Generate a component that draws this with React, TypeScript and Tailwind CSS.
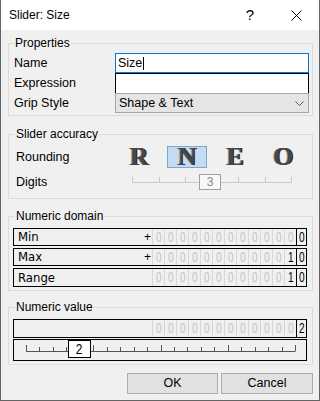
import React from "react";

const ui = "font-['Liberation_Sans',Arial,sans-serif]";
const narrow = "font-['Liberation_Sans_Narrow','DejaVu_Sans_Condensed','Liberation_Sans',sans-serif]";

function Group({ title, legendClass, children }: { title: string; legendClass: string; children: React.ReactNode }) {
  return (
    <fieldset className="border border-[#dcdcdc]">
      <legend className={`px-[1px] text-[12px] leading-[14px] ${legendClass}`}>{title}</legend>
      {children}
    </fieldset>
  );
}

function Cells({ value }: { value: string }) {
  const total = 13;
  const pad = total - value.length;
  const cells = Array.from({ length: total }, (_, i) =>
    i < pad ? { ch: "0", on: false } : { ch: value[i - pad], on: true }
  );
  return (
    <div className="flex h-full">
      {cells.map((c, i) => {
        const last = i === total - 1;
        return (
          <div
            key={i}
            className={`flex h-full items-center justify-center border-l font-['Liberation_Sans',sans-serif] text-[14px] ${
              last ? "w-[10px] border-black" : "w-[12px] border-[#d8d8d8]"
            } ${c.on ? "text-black" : "text-[#c4c4c4]"}`}
          >
            <span className="inline-block scale-x-[0.72]">{c.ch}</span>
          </div>
        );
      })}
    </div>
  );
}

function NumRow({ label, sign, value, h }: { label?: string; sign?: boolean; value: string; h: string }) {
  return (
    <div className={`flex ${h} border border-black bg-[#f0f0f0]`}>
      <span className={`flex flex-1 items-center pl-[4px] text-[13px] ${narrow}`}>{label}</span>
      {sign && <span className="flex w-[8px] items-center text-[12px]">+</span>}
      <Cells value={value} />
    </div>
  );
}

function AccuracySlider() {
  const ticks = Array.from({ length: 7 }, (_, i) => Math.round(i * 26.5) + 0.5);
  return (
    <div className="relative ml-[13px] h-[16px] w-[160px]">
      <svg width="160" height="16" className="block">
        <line x1="0.5" y1="8.5" x2="159.5" y2="8.5" stroke="#c8c8c8" />
        {ticks.map((x) => (
          <line key={x} x1={x} y1="3" x2={x} y2="8.5" stroke="#c8c8c8" />
        ))}
      </svg>
      <div className="absolute left-[67px] top-0 flex h-[16px] w-[22px] items-center justify-center border border-[#a0a0a0] bg-[#f8f8f8] text-[12px] text-[#8a8a8a]">
        3
      </div>
    </div>
  );
}

function ValueSlider() {
  const ticks = Array.from({ length: 21 }, (_, i) => i);
  return (
    <div className="relative h-[22px] border border-black bg-[#f0f0f0]">
      <svg width="292" height="20" className="block">
        <line x1="12" y1="11.5" x2="281" y2="11.5" stroke="#555" />
        {ticks.map((i) => {
          const x = Math.round(12 + i * 13.45) + 0.5;
          const tall = i % 5 === 0;
          return <line key={i} x1={x} y1={tall ? 5 : 7} x2={x} y2="11.5" stroke="#555" />;
        })}
      </svg>
      <div className="absolute left-[54px] top-0 flex h-[18px] w-[23px] items-center justify-center border border-black bg-white text-[15px]">
        <span className="inline-block scale-x-[0.8]">2</span>
      </div>
    </div>
  );
}

const letters = ["R", "N", "E", "O"];

export default function App() {
  return (
    <div className={`flex h-[401px] w-[320px] flex-col border-x border-b border-[#646464] text-black ${ui}`}>
      <div className="flex h-[30px] shrink-0 items-center bg-white">
        <span className="flex-1 pl-[8px] text-[12px]">Slider: Size</span>
        <div className="flex h-full w-[46px] items-center justify-center text-[15px]">?</div>
        <div className="flex h-full w-[46px] items-center justify-center">
          <svg width="11" height="11">
            <path d="M0.5 0.5L10.5 10.5M10.5 0.5L0.5 10.5" stroke="#000" strokeWidth="1" fill="none" />
          </svg>
        </div>
      </div>

      <div className="flex flex-1 flex-col bg-[#f0f0f0] pl-[7px] pr-[6px] pt-[6px]">
        <Group title="Properties" legendClass="ml-[5px]">
          <div className="flex flex-col pb-[2px] pl-[5px] pr-[3px] pt-[3px] text-[12.5px]">
            <div className="flex h-[20px] items-center">
              <span className="w-[101px]">Name</span>
              <div className="flex h-full flex-1 items-center border border-[#0078d7] bg-white pl-[2px]">
                Size<span className="ml-[1px] h-[13px] w-[1px] bg-black" />
              </div>
            </div>
            <div className="flex h-[20px] items-center">
              <span className="w-[101px]">Expression</span>
              <div className="h-full flex-1 border-x border-t border-black bg-white" />
            </div>
            <div className="flex h-[20px] items-center">
              <span className="w-[101px]">Grip Style</span>
              <div className="flex h-full flex-1 items-center justify-between border border-[#a6a6a6] bg-[#e5e5e5] pl-[3px] pr-[4px]">
                <span>Shape &amp; Text</span>
                <svg width="9" height="5">
                  <path d="M0.5 0.5L4.5 4.5L8.5 0.5" stroke="#555" fill="none" />
                </svg>
              </div>
            </div>
          </div>
        </Group>

        <div className="mt-[11px]">
          <Group title="Slider accuracy" legendClass="ml-[6px]">
            <div className="flex flex-col pb-[8px] pt-[5px] text-[12.5px]">
              <div className="flex h-[22px] items-center">
                <span className="w-[110px] pl-[7px]">Rounding</span>
                <div className="flex gap-[8px]">
                  {letters.map((l) => (
                    <div
                      key={l}
                      className={`flex h-[22px] w-[40px] items-center justify-center font-['Liberation_Serif',serif] text-[26px] font-bold leading-none text-[#474747] [text-shadow:1px_0_0_#222,-1px_0_0_#a0a0a0] ${
                        l === "N" ? "border border-[#7ea6cc] bg-[#c3dcf1]" : ""
                      }`}
                    >
                      {l}
                    </div>
                  ))}
                </div>
              </div>
              <div className="mt-[6px] flex h-[16px] items-center">
                <span className="w-[110px] pl-[7px]">Digits</span>
                <AccuracySlider />
              </div>
            </div>
          </Group>
        </div>

        <div className="mt-[10px]">
          <Group title="Numeric domain" legendClass="ml-[6px]">
            <div className="flex flex-col gap-[2px] pb-[3px] pl-[4px] pr-[5px] pt-[5px]">
              <NumRow label="Min" sign value="0" h="h-[18px]" />
              <NumRow label="Max" sign value="10" h="h-[18px]" />
              <NumRow label="Range" value="10" h="h-[19px]" />
            </div>
          </Group>
        </div>

        <div className="mt-[9px]">
          <Group title="Numeric value" legendClass="ml-[6px]">
            <div className="flex flex-col pb-[3px] pl-[4px] pr-[5px] pt-[5px]">
              <NumRow value="2" h="h-[19px]" />
              <div className="mt-[1px]">
                <ValueSlider />
              </div>
            </div>
          </Group>
        </div>

        <div className="mt-[8px] flex justify-end gap-[3px] text-[12.5px]">
          <button className="h-[21px] w-[91px] border border-[#adadad] bg-[#e1e1e1]">OK</button>
          <button className="h-[21px] w-[92px] border border-[#adadad] bg-[#e1e1e1]">Cancel</button>
        </div>
      </div>
    </div>
  );
}
